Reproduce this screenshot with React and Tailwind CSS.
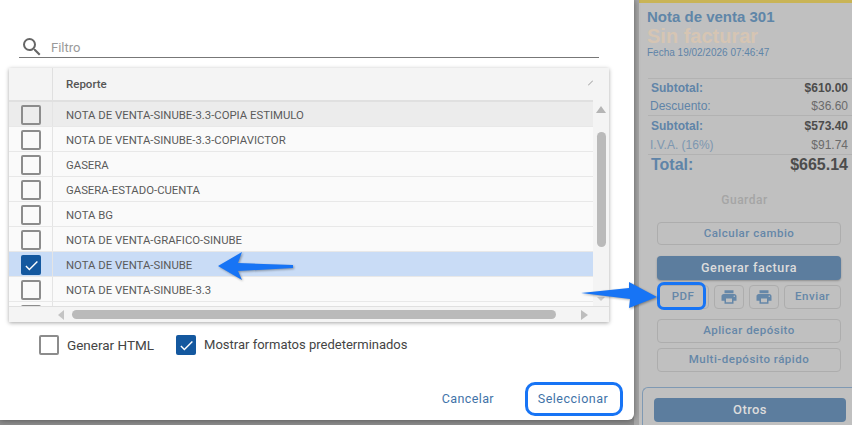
import { MdPrint, MdSearch, MdCheck } from 'react-icons/md'

const reports = [
  'NOTA DE VENTA-SINUBE-3.3-COPIA ESTIMULO',
  'NOTA DE VENTA-SINUBE-3.3-COPIAVICTOR',
  'GASERA',
  'GASERA-ESTADO-CUENTA',
  'NOTA BG',
  'NOTA DE VENTA-GRAFICO-SINUBE',
  'NOTA DE VENTA-SINUBE',
  'NOTA DE VENTA-SINUBE-3.3',
  '',
]

function Checkbox({ checked }) {
  if (checked) {
    return (
      <div className="w-5 h-5 shrink-0 rounded-[2px] bg-[#14589f] flex items-center justify-center text-white">
        <MdCheck size={17} />
      </div>
    )
  }
  return <div className="w-5 h-5 shrink-0 rounded-[2px] border-2 border-[#8c8c8c]" />
}

function ReportRow({ name, index }) {
  const selected = index === 6
  const hovered = index === 0
  return (
    <div
      className={`flex h-[25px] shrink-0 border-b border-[#e8e8e8] ${
        selected ? 'bg-[#c9dcf6]' : hovered ? 'bg-[#ececec]' : 'bg-[#fafafa]'
      }`}
    >
      <div className="w-[44px] shrink-0 border-r border-[#e4e4e4] pl-3 pt-[3px]">
        <Checkbox checked={selected} />
      </div>
      <div className="pl-[13px] leading-[26px] text-[11.35px] text-[#5a5a5a]">{name}</div>
    </div>
  )
}

function SummaryRow({ label, value, bold, big, faded, indent }) {
  const size = big ? 'text-[16px] font-bold' : bold ? 'text-[12px] font-bold' : 'text-[12px]'
  return (
    <div className={`flex justify-between items-center pr-1 ${big ? 'h-[20px]' : 'h-[18px]'} ${indent ? 'pl-[2px]' : 'pl-[3px]'} ${size}`}>
      <span className={faded ? 'text-[#7d97b0]' : 'text-[#5f84a8]'}>{label}</span>
      <span className={bold || big ? 'text-[#4c4c4c]' : 'text-[#6b6b6b]'}>{value}</span>
    </div>
  )
}

function OutlineButton({ children, className = '' }) {
  return (
    <div
      className={`flex items-center justify-center rounded-[4px] border border-[#adadad] text-[11.5px] font-medium tracking-[0.5px] text-[#6587a8] ${className}`}
    >
      {children}
    </div>
  )
}

export default function App() {
  return (
    <div className="relative flex w-[852px] h-[425px] overflow-hidden bg-[#8d8d8d] font-['Roboto',sans-serif]">
      {/* dialog */}
      <div className="w-[634px] h-[420px] shrink-0 flex flex-col bg-white rounded-br-md shadow-[0_0_6px_rgba(0,0,0,0.45)] z-10">
        <div className="flex items-center w-[580px] ml-[19px] mt-[37px] h-[21px] pt-[2px] border-b border-[#777] text-[#666]">
          <MdSearch size={24} className="ml-[1px] -mt-[2px] shrink-0" />
          <span className="ml-[7px] text-[13px] text-[#9a9a9a]">Filtro</span>
        </div>

        <div className="flex flex-col mx-[9px] mt-[10px] w-[600px] h-[254px] bg-[#f4f4f4] shadow-[0_1px_4px_rgba(0,0,0,0.35)]">
          <div className="flex flex-1 min-h-0">
            <div className="flex flex-col flex-1 min-w-0 overflow-hidden">
              <div className="flex h-[34px] shrink-0 border-b-2 border-[#e0e0e0]">
                <div className="w-[44px] border-r border-[#e0e0e0]" />
                <div className="pl-[13px] leading-[32px] text-[11.5px] font-medium text-[#555]">Reporte</div>
                <svg className="ml-auto mt-[12px]" width="5" height="6" viewBox="0 0 5 6">
                  <path d="M0 5.5 L5 0.5" stroke="#999" strokeWidth="1" fill="none" />
                </svg>
              </div>
              {reports.map((name, i) => (
                <ReportRow key={i} name={name} index={i} />
              ))}
            </div>
            {/* vertical scrollbar */}
            <div className="w-4 shrink-0 flex flex-col items-center pt-[38px]">
              <div className="w-0 h-0 border-x-[5px] border-x-transparent border-b-[7px] border-b-[#b5b5b5]" />
              <div className="w-[9px] h-[115px] mt-[19px] rounded-full bg-[#bababa]" />
              <div className="w-0 h-0 mt-[50px] border-x-[4px] border-x-transparent border-t-[4px] border-t-[#c8c8c8]" />
            </div>
          </div>
          {/* horizontal scrollbar */}
          <div className="flex items-center h-[16px] shrink-0 border-t border-[#e0e0e0] pl-[49px]">
            <div className="w-0 h-0 border-y-[5px] border-y-transparent border-r-[6px] border-r-[#c4c4c4]" />
            <div className="w-[484px] h-[9px] ml-[8px] rounded-full bg-[#bababa]" />
            <div className="w-0 h-0 ml-[25px] border-y-[5px] border-y-transparent border-l-[7px] border-l-[#bdbdbd]" />
          </div>
        </div>

        <div className="flex items-center mt-[13px] ml-[39px] h-5 text-[#444]">
          <Checkbox />
          <span className="ml-2 text-[13.5px]">Generar HTML</span>
          <div className="ml-[22px]">
            <Checkbox checked />
          </div>
          <span className="ml-2 text-[13px]">Mostrar formatos predeterminados</span>
        </div>

        <div className="flex items-center justify-end mt-[27px] mr-[11px] text-[12.5px] tracking-[0.5px] text-[#3f73a8]">
          <span className="mr-[31px] tracking-[0.4px]">Cancelar</span>
          <div className="flex items-center justify-center w-[98px] h-[34px] rounded-[10px] border-[3px] border-[#1774f5] pr-[2px]">
            Seleccionar
          </div>
        </div>
      </div>

      {/* dimmed page behind the dialog */}
      <div className="relative flex flex-col flex-1 min-w-0 bg-[#c0c0c0] border-l-[5px] border-[#a6a6a6]">
        <div className="h-[3px] shrink-0 bg-[#c9b456]" />
        <div className="pl-2 pt-[6px] font-['Liberation_Sans',sans-serif]">
          <div className="text-[15px] leading-[16px] font-bold text-[#5f86a8]">Nota de venta 301</div>
          <div className="text-[20px] leading-[22px] font-bold text-[#d6c5b3]">Sin facturar</div>
          <div className="text-[10px] leading-[12px] text-[#5f84a8]">Fecha 19/02/2026 07:46:47</div>
        </div>
        <div className="ml-[9px] mt-[19px] border-t border-[#b2b2b2] font-['Liberation_Sans',sans-serif]">
          <SummaryRow label="Subtotal:" value="$610.00" bold />
          <SummaryRow label="Descuento:" value="$36.60" indent />
          <div className="border-t border-[#b2b2b2] pt-[1px]">
            <SummaryRow label="Subtotal:" value="$573.40" bold />
          </div>
          <div className="pt-[1px]">
            <SummaryRow label="I.V.A. (16%)" value="$91.74" faded indent />
          </div>
          <div className="border-t border-[#b2b2b2]">
            <SummaryRow label="Total:" value="$665.14" big />
          </div>
        </div>

        <div className="mt-[16px] text-center text-[12px] font-medium tracking-[0.5px] text-[#a5a5a5] pr-[2px]">Guardar</div>

        <div className="flex flex-col mt-[13px] ml-[18px] mr-[11px]">
          <OutlineButton className="h-[23px]">Calcular cambio</OutlineButton>
          <div className="flex items-center justify-center h-[24px] mt-[11px] rounded-[4px] bg-[#5c7d9e] text-[12.5px] font-medium tracking-[0.6px] text-[#dcdcdc] shadow-[0_1px_2px_rgba(0,0,0,0.25)]">
            Generar factura
          </div>
          <div className="flex gap-[5px] mt-[5px]">
            <OutlineButton className="w-[52px] h-[24px]">PDF</OutlineButton>
            <OutlineButton className="w-[30px] h-[24px]">
              <MdPrint size={18} />
            </OutlineButton>
            <OutlineButton className="w-[30px] h-[24px]">
              <MdPrint size={18} />
            </OutlineButton>
            <OutlineButton className="flex-1 h-[24px]">Enviar</OutlineButton>
          </div>
          <OutlineButton className="mt-[10px] h-[24px]">Aplicar depósito</OutlineButton>
          <OutlineButton className="mt-[5px] h-[24px]">Multi-depósito rápido</OutlineButton>
        </div>

        <div className="flex-1 mt-[15px] ml-[3px] px-[11px] pt-[10px] rounded-tl-[6px] border-l border-t border-[#7f99b3]">
          <div className="flex items-center justify-center h-[24px] w-[192px] rounded-[4px] bg-[#5c7d9e] text-[13px] font-medium tracking-[0.4px] text-[#dcdcdc]">
            Otros
          </div>
        </div>
      </div>

      {/* annotations */}
      <div className="absolute left-[657px] top-[282px] w-[49px] h-[28px] rounded-[7px] border-[3px] border-[#1774f5] z-20" />
      <svg className="absolute left-0 top-0 z-20 drop-shadow-[1px_1px_1px_rgba(0,0,0,0.35)]" width="852" height="425" viewBox="0 0 852 425">
        <path d="M218 266 L242 252 L238 263 L293 265 L293 268 L238 271 L242 280 Z" fill="#1774f5" />
        <path d="M581 293 L629 288 L629 282 L657 297 L629 308 L630 299 Z" fill="#1774f5" />
      </svg>
    </div>
  )
}
